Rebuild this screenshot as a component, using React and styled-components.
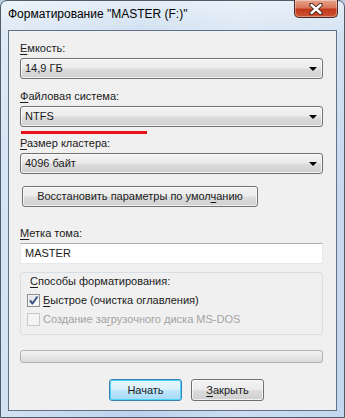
import React from 'react';
import styled, { createGlobalStyle, css } from 'styled-components';

const GlobalStyle = createGlobalStyle`
    html, body {
        margin: 0;
        padding: 0;
        background: #b9cde6;
    }
    body {
        font-family: "Liberation Sans", Arial, sans-serif;
        font-size: 11px;
        color: #1a1a1a;
        white-space: nowrap;
    }
`;

const Key = styled.span`
    text-decoration: underline;
    text-underline-offset: 2px;
`;

const Combo = ({ value }) => (
    <ComboBox>
        <ComboValue>{value}</ComboValue>
        <Arrow />
    </ComboBox>
);

const Check = ({ checked, disabled, children }) => (
    <CheckRow $disabled={disabled}>
        <CheckBox $disabled={disabled}>
            {checked && (
                <svg width="11" height="11" viewBox="0 0 11 11">
                    <path d="M2 5.5 L4.5 8.5 L9.5 1.5" fill="none" stroke="#3c5189" strokeWidth="2" strokeLinejoin="round" />
                </svg>
            )}
        </CheckBox>
        <span>{children}</span>
    </CheckRow>
);

const App = () => {
    return (
        <>
            <GlobalStyle />
            <Window>
                <TitleBar>
                    <Title>Форматирование "MASTER (F:)"</Title>
                    <CloseBtn>
                        <svg width="14" height="12" viewBox="0 0 14 12">
                            <path d="M2.5 2 L11.5 10 M11.5 2 L2.5 10" stroke="#3a1a12" strokeWidth="4.2" strokeLinecap="round" />
                            <path d="M2.5 2 L11.5 10 M11.5 2 L2.5 10" stroke="#fff" strokeWidth="2.4" strokeLinecap="round" />
                        </svg>
                    </CloseBtn>
                </TitleBar>
                <Client>
                    <Label $top={10}><Key>Е</Key>мкость:</Label>
                    <Combo value="14,9 ГБ" />
                    <Label $top={10}><Key>Ф</Key>айловая система:</Label>
                    <Combo value="NTFS" />
                    <RedMark />
                    <Label $top={2}><Key>Р</Key>азмер кластера:</Label>
                    <Combo value="4096 байт" />
                    <ResetBtn>Восстановить параметры по умол<Key>ч</Key>анию</ResetBtn>
                    <Label $top={19}><Key>М</Key>етка тома:</Label>
                    <TextBox>MASTER</TextBox>
                    <Group>
                        <GroupTitle><Key>С</Key>пособы форматирования:</GroupTitle>
                        <Check checked><Key>Б</Key>ыстрое (очистка оглавления)</Check>
                        <Check disabled>Создание за<Key>г</Key>рузочного диска MS-DOS</Check>
                    </Group>
                    <Progress />
                    <ButtonRow>
                        <DialogBtn $default>Начать</DialogBtn>
                        <DialogBtn><Key>З</Key>акрыть</DialogBtn>
                    </ButtonRow>
                </Client>
            </Window>
        </>
    );
};

export default App;

const Window = styled.div`
    width: 345px;
    height: 418px;
    box-sizing: border-box;
    padding: 0 7px 6px 7px;
    border: 1px solid #4f5c6b;
    border-radius: 7px 7px 0 0;
    background:
        linear-gradient(to right, rgba(255, 255, 255, 0.35), rgba(255, 255, 255, 0) 40%, rgba(255, 255, 255, 0.25) 70%, rgba(255, 255, 255, 0.1)),
        linear-gradient(to bottom, #e4edf7 0%, #cfdff1 8%, #c2d6ee 40%, #bcd2ec 100%);
    display: flex;
    flex-direction: column;
`;

const TitleBar = styled.div`
    height: 29px;
    flex-shrink: 0;
    display: flex;
    justify-content: space-between;
    align-items: flex-start;
`;

const Title = styled.div`
    padding: 6px 0 0 0;
    font-size: 12px;
    line-height: 15px;
    color: #000;
`;

const CloseBtn = styled.div`
    width: 44px;
    height: 18px;
    margin-top: -1px;
    margin-right: -1px;
    box-sizing: border-box;
    border: 1px solid #4a2a22;
    border-top: none;
    border-radius: 0 0 5px 5px;
    background: linear-gradient(to bottom, #e7a38c 0%, #d9765a 45%, #c2391b 55%, #cf5434 100%);
    box-shadow: inset 0 0 0 1px rgba(255, 255, 255, 0.35);
    display: flex;
    align-items: center;
    justify-content: center;
`;

const Client = styled.div`
    flex: 1;
    border: 1px solid #5f7289;
    background: #f0f0f0;
    padding: 0 15px 0 11px;
    display: flex;
    flex-direction: column;
    align-items: flex-start;
`;

const Label = styled.div`
    margin-top: ${(p) => p.$top}px;
    line-height: 15px;
`;

const controlFace = css`
    border: 1px solid #707070;
    border-radius: 3px;
    background: linear-gradient(to bottom, #f2f2f2 0%, #ebebeb 48%, #dddddd 52%, #cfcfcf 100%);
    box-shadow: inset 0 0 0 1px rgba(255, 255, 255, 0.7);
    box-sizing: border-box;
`;

const ComboBox = styled.div`
    ${controlFace}
    width: 303px;
    height: 21px;
    margin-top: 2px;
    display: flex;
    align-items: center;
    justify-content: space-between;
    padding: 0 5px 0 4px;
`;

const ComboValue = styled.span`
    line-height: 15px;
`;

const Arrow = styled.span`
    width: 0;
    height: 0;
    border-left: 4px solid transparent;
    border-right: 4px solid transparent;
    border-top: 4px solid #000;
    margin-top: 1px;
`;

const RedMark = styled.div`
    width: 126px;
    height: 3px;
    margin-top: 4px;
    margin-left: 1px;
    background: #e8121a;
`;

const ResetBtn = styled.div`
    ${controlFace}
    width: 236px;
    height: 21px;
    margin: 12px 0 0 2px;
    line-height: 19px;
    text-align: center;
`;

const TextBox = styled.div`
    width: 303px;
    height: 21px;
    margin-top: 2px;
    box-sizing: border-box;
    background: #fff;
    border: 1px solid #e3e9ef;
    border-top-color: #abadb3;
    padding-left: 4px;
    line-height: 19px;
`;

const Group = styled.div`
    width: 303px;
    margin-top: 8px;
    box-sizing: border-box;
    border: 1px solid #d5dfe5;
    border-radius: 3px;
    padding: 1px 0 6px 6px;
    display: flex;
    flex-direction: column;
`;

const GroupTitle = styled.div`
    margin-left: 3px;
    line-height: 15px;
`;

const CheckRow = styled.div`
    display: flex;
    align-items: center;
    gap: 3px;
    height: 17px;
    margin-top: 3px;
    line-height: 15px;
    color: ${(p) => (p.$disabled ? '#a3a3a3' : '#1a1a1a')};
    & + & {
        margin-top: 2px;
    }
`;

const CheckBox = styled.span`
    width: 13px;
    height: 13px;
    box-sizing: border-box;
    border: 1px solid ${(p) => (p.$disabled ? '#c9c9c9' : '#8e8f8f')};
    background: ${(p) =>
        p.$disabled
            ? '#f4f4f4'
            : 'linear-gradient(135deg, #d8dbe0 0%, #f3f4f6 60%, #ffffff 100%)'};
    box-shadow: inset 0 0 0 1px #f4f4f4;
    display: flex;
    align-items: center;
    justify-content: center;
`;

const Progress = styled.div`
    width: 303px;
    height: 13px;
    margin-top: 15px;
    box-sizing: border-box;
    border: 1px solid #b2b2b2;
    border-radius: 3px;
    background: linear-gradient(to bottom, #f3f3f3 0%, #e8e8e8 50%, #d9d9d9 100%);
`;

const ButtonRow = styled.div`
    display: flex;
    gap: 9px;
    margin-top: 16px;
    padding-left: 89px;
`;

const DialogBtn = styled.div`
    ${controlFace}
    width: 73px;
    height: 22px;
    line-height: 20px;
    text-align: center;
    ${(p) =>
        p.$default &&
        css`
            border-color: #3c7fb1;
            box-shadow: inset 0 0 0 1px #48d7fb;
            background: linear-gradient(to bottom, #eaf6fd 0%, #d9f0fc 48%, #bee6fd 52%, #a7d9f5 100%);
        `}
`;
